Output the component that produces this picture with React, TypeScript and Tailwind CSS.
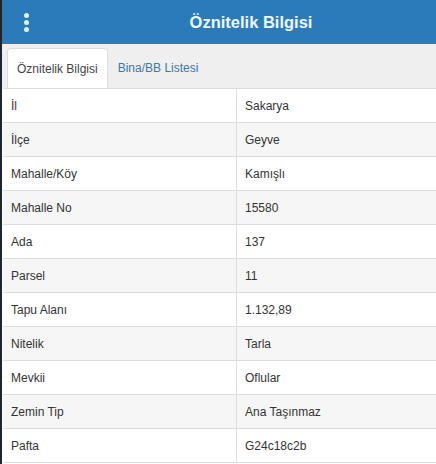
import React from "react";

const rows: [string, string][] = [
  ["İl", "Sakarya"],
  ["İlçe", "Geyve"],
  ["Mahalle/Köy", "Kamışlı"],
  ["Mahalle No", "15580"],
  ["Ada", "137"],
  ["Parsel", "11"],
  ["Tapu Alanı", "1.132,89"],
  ["Nitelik", "Tarla"],
  ["Mevkii", "Oflular"],
  ["Zemin Tip", "Ana Taşınmaz"],
  ["Pafta", "G24c18c2b"],
];

export default function App() {
  return (
    <div
      className="flex w-[436px] h-[464px] overflow-hidden bg-white text-[#333]"
      style={{ fontFamily: '"Liberation Sans", Arial, sans-serif' }}
    >
      <div className="w-[2px] shrink-0 bg-[#1c2531]" />
      <div className="flex flex-1 flex-col min-w-0">
        {/* title bar */}
        <div className="flex h-[44px] shrink-0 items-center bg-[#2b7bbb]">
          <div className="flex w-[64px] items-center pl-[22px]">
            <div className="flex flex-col gap-[2px]">
              <span className="block h-[5px] w-[5px] rounded-full bg-[#dff2ff]" />
              <span className="block h-[5px] w-[5px] rounded-full bg-[#dff2ff]" />
              <span className="block h-[5px] w-[5px] rounded-full bg-[#dff2ff]" />
            </div>
          </div>
          <div className="flex-1 text-center text-[16.5px] font-bold text-[#eef8ff]">
            Öznitelik Bilgisi
          </div>
        </div>

        {/* tabs */}
        <div className="flex h-[44px] shrink-0 items-end bg-[#efefef] pl-[5px]">
          <div className="flex h-[40px] items-center rounded-t-[4px] border border-b-0 border-[#dddddd] bg-white px-[9px] text-[12px] text-[#444]">
            Öznitelik Bilgisi
          </div>
          <div className="flex h-[40px] items-center px-[10px] text-[12px] text-[#3a78ad]">
            Bina/BB Listesi
          </div>
        </div>

        {/* attribute table */}
        <div className="border-t border-[#dddddd] ml-[1px]">
          {rows.map(([k, v], i) => (
            <div
              key={k}
              className={`grid grid-cols-[234px_1fr] h-[34px] border-b border-[#dddddd] text-[12px] ${
                i % 2 === 1 ? "bg-[#f6f6f6]" : "bg-white"
              }`}
            >
              <div className="flex items-center border-r border-[#dddddd] pl-[8px]">{k}</div>
              <div className="flex items-center pl-[8px]">{v}</div>
            </div>
          ))}
        </div>
      </div>
    </div>
  );
}
